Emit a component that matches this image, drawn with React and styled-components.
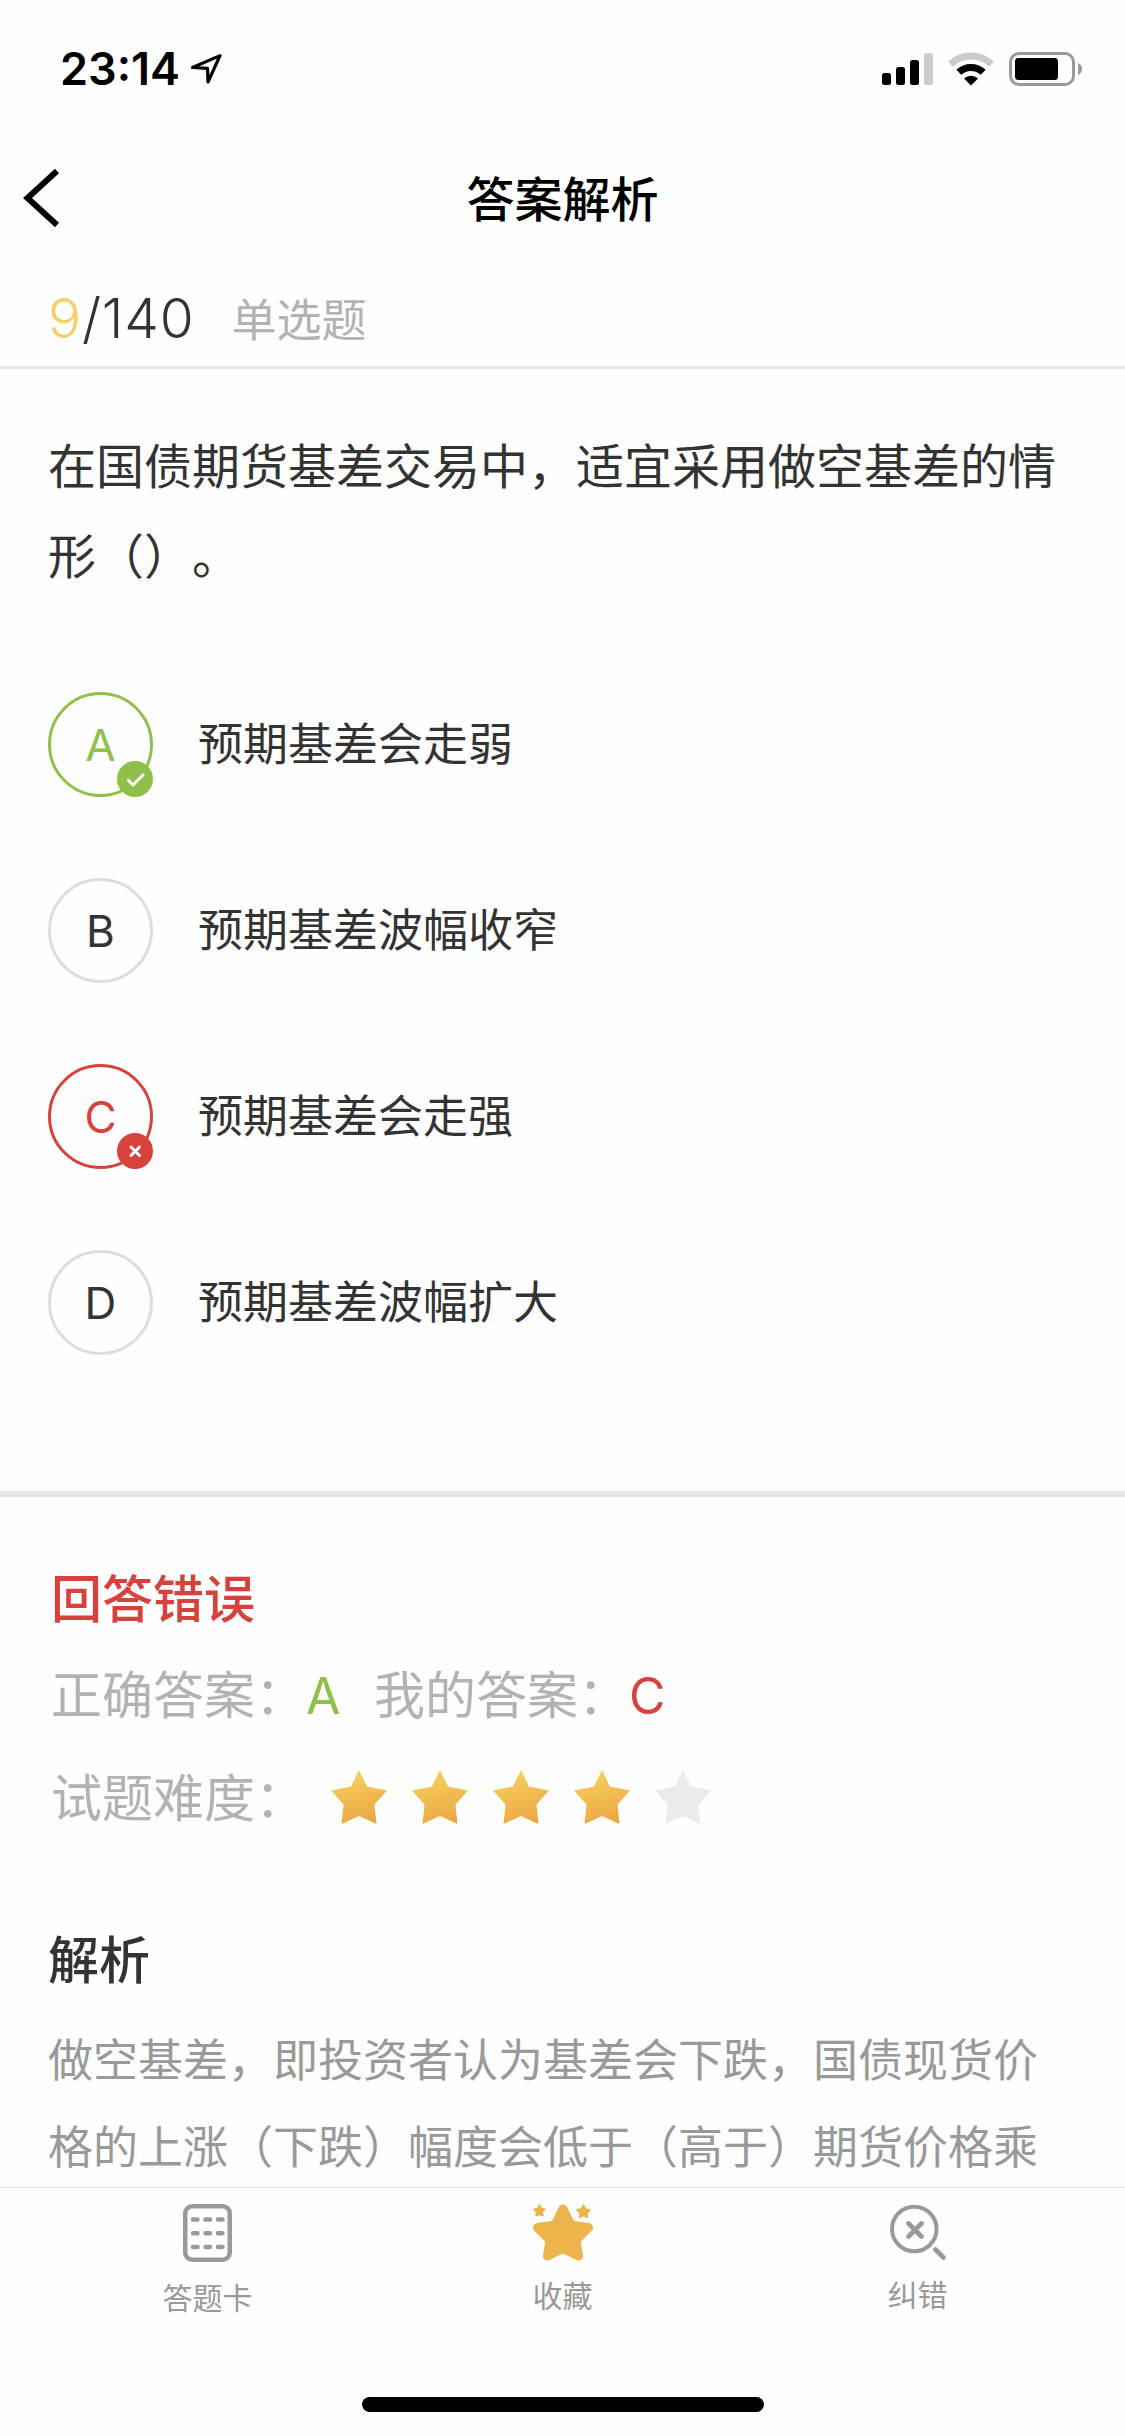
import React from 'react'
import styled, { createGlobalStyle } from 'styled-components'

const GlobalStyle = createGlobalStyle`
  * {
    box-sizing: border-box;
  }
  body {
    margin: 0;
    background: #fefefe;
    color: #333;
    font-family: Inter, 'Noto Sans CJK SC', sans-serif;
    text-spacing-trim: space-all;
  }
`

const Screen = styled.div`
  width: 1125px;
  height: 2436px;
  display: flex;
  flex-direction: column;
  overflow: hidden;
`

const StatusBar = styled.div`
  height: 132px;
  flex: none;
  padding: 5px 43px 0 60px;
  display: flex;
  align-items: center;
  justify-content: space-between;
`

const Clock = styled.div`
  display: flex;
  align-items: center;
  gap: 11px;
  color: #000;
  font-size: 45px;
  font-weight: 600;
`

const StatusIcons = styled.div`
  display: flex;
  align-items: center;
  gap: 15px;

  svg {
    display: block;
  }
`

const NavBar = styled.div`
  height: 132px;
  flex: none;
  display: grid;
  grid-template-columns: 120px 1fr 120px;
  align-items: center;
`

const BackButton = styled.button`
  border: 0;
  padding: 0 0 0 22px;
  background: none;
  display: flex;
`

const Title = styled.h1`
  margin: 0;
  padding-top: 3px;
  color: #000;
  font-size: 48px;
  line-height: 72px;
  font-weight: 500;
  text-align: center;
`

const Progress = styled.div`
  height: 105px;
  flex: none;
  padding: 6px 48px 0;
  display: flex;
  align-items: center;
  border-bottom: 3px solid #e5e5e5;
`

const Counter = styled.span`
  font-size: 55px;
  font-weight: 300;
  letter-spacing: 0.8px;

  em {
    color: #f5cf67;
    font-style: normal;
  }
`

const Kind = styled.span`
  margin-left: 37px;
  margin-top: -2px;
  color: #b2b2b2;
  font-size: 45px;
`

const Content = styled.main`
  flex: 1;
  min-height: 0;
  overflow: hidden;
`

const Question = styled.p`
  margin: 0;
  padding: 53px 48px 0;
  font-size: 48px;
  line-height: 90px;
`

const Options = styled.ul`
  list-style: none;
  margin: 0;
  padding: 90px 48px 136px;
  display: flex;
  flex-direction: column;
  gap: 81px;
`

const Option = styled.li`
  display: flex;
  align-items: center;
  gap: 45px;
  font-size: 45px;
  line-height: 66px;
`

const Letter = styled.span`
  position: relative;
  width: 105px;
  height: 105px;
  padding-top: 1px;
  display: flex;
  align-items: center;
  justify-content: center;
  border: 3px solid ${({ tone }) => tone || '#ddd'};
  border-radius: 50%;
  color: ${({ tone }) => tone || '#333'};
  font-size: 44px;

  svg {
    position: absolute;
    right: -3px;
    bottom: -3px;
  }
`

const Result = styled.section`
  padding: 67px 51px 0;
  border-top: 6px solid #e6e6e6;
  font-size: 51px;
`

const Verdict = styled.h2`
  margin: 0;
  color: #d8423d;
  font-size: 51px;
  line-height: 72px;
  font-weight: 500;
`

const Row = styled.div`
  display: flex;
  align-items: center;
  margin-top: ${({ top }) => top}px;
  height: 72px;
  line-height: 72px;
  color: #b2b2b2;
`

const Answer = styled.span`
  width: 35px;
  color: ${({ tone }) => tone};
  margin-right: 33px;
  font-size: 50px;
`

const Stars = styled.div`
  display: flex;
  gap: 25px;
  margin: -4px 0 0 25px;
`

const Analysis = styled.section`
  padding: 90px 48px 0;
`

const Heading = styled.h2`
  margin: 0;
  font-size: 51px;
  line-height: 72px;
  font-weight: 500;
`

const Paragraph = styled.p`
  margin: 20px 0 0;
  color: #999;
  font-size: 45px;
  line-height: 87px;
`

const TabBar = styled.nav`
  height: 249px;
  flex: none;
  border-top: 1px solid #ddd;
  display: flex;
  flex-direction: column;
  justify-content: space-between;
  align-items: center;
`

const Tabs = styled.div`
  width: 1065px;
  display: flex;
`

const Tab = styled.a`
  flex: 1;
  padding-top: 16px;
  display: flex;
  flex-direction: column;
  align-items: center;
  gap: ${({ gap }) => gap}px;
  color: #999;
  font-size: 30px;
  line-height: 44px;

  svg {
    display: block;
  }
`

const HomeIndicator = styled.div`
  width: 402px;
  height: 15px;
  margin-bottom: 24px;
  border-radius: 8px;
  background: #000;
`

const GREEN = '#91c04a'
const RED = '#d8423d'

const options = [
  { key: 'A', text: '预期基差会走弱', tone: GREEN, mark: 'M11.5 19.5l4.5 4.5L26 14' },
  { key: 'B', text: '预期基差波幅收窄' },
  { key: 'C', text: '预期基差会走强', tone: RED, mark: 'M14 14l8.5 8.5M22.5 14L14 22.5' },
  { key: 'D', text: '预期基差波幅扩大' },
]

const Star = ({ on }) => (
  <svg width="56" height="54" viewBox="0 0 56 54">
    <defs>
      <linearGradient id="gold" x1="0.35" y1="0" x2="0.65" y2="1">
        <stop offset="0" stopColor="#f6d25c" />
        <stop offset="1" stopColor="#eba545" />
      </linearGradient>
    </defs>
    <path
      d="M28 0l8 16.5 20 4L43.5 34.5 45.5 54 28 46 10.5 54l2-19.5L0 20.5l20-4z"
      fill={on ? 'url(#gold)' : '#ebebeb'}
    />
  </svg>
)

const CardIcon = () => (
  <svg width="49" height="58" viewBox="0 0 49 58" fill="none" stroke="#999">
    <rect x="2.25" y="2.25" width="44.5" height="53.5" rx="7" strokeWidth="4.5" />
    <path
      d="M10 15.5h4.5m8 0H27m8 0h4.5M10 29.25h4.5m8 0H27m8 0h4.5M10 43h4.5m8 0H27m8 0h4.5"
      strokeWidth="4.5"
      strokeLinecap="round"
    />
  </svg>
)

const FavoriteIcon = () => (
  <svg width="60" height="57" viewBox="0 0 60 57" fill="#ecb44b" stroke="#ecb44b" strokeLinejoin="round">
    <path d="M30 5l8 16 17.5 2.5L43 36l2.5 16L30 44.5 14.5 52 17 36 4.5 23.5 22 21z" strokeWidth="9" />
    <path d="M6.5 1l1.8 3.4 3.7.8-2.6 2.8.5 3.8-3.4-1.6-3.4 1.6.5-3.8L1 5.2l3.7-.8z" strokeWidth="1.5" />
    <path d="M50.5 1l2.2 3.9 4.4.9-3.1 3.2.5 4.5-4-2-4 2 .5-4.5-3.1-3.2 4.4-.9z" strokeWidth="1.5" />
  </svg>
)

const CorrectIcon = () => (
  <svg width="56" height="56" viewBox="0 0 56 56" fill="none" stroke="#999" strokeLinecap="round">
    <circle cx="24.3" cy="25" r="22.3" strokeWidth="4" />
    <path d="M18.5 19.5l13 13M31.5 19.5l-13 13M45.5 45.5l8 8" strokeWidth="4.6" />
  </svg>
)

export default function App() {
  return (
    <Screen>
      <GlobalStyle />
      <StatusBar>
        <Clock>
          23:14
          <svg width="31" height="30" viewBox="0 0 31 30" fill="none" stroke="#000" strokeWidth="3.2" strokeLinejoin="round">
            <path d="M29 1.6L1.6 13.5l14.9.8L17 28z" />
          </svg>
        </Clock>
        <StatusIcons>
          <svg width="51" height="33" viewBox="0 0 51 33">
            <rect y="21" width="9" height="12" rx="2.5" />
            <rect x="14" y="15" width="9" height="18" rx="2.5" />
            <rect x="28" y="8" width="9" height="25" rx="2.5" />
            <rect x="42" y="1" width="9" height="32" rx="2.5" fill="#ccc" />
          </svg>
          <svg width="46" height="34" viewBox="0 0 46 34" fill="none">
            <path d="M2.5 12.2a29.5 29.5 0 0 1 41 0" stroke="#ccc" strokeWidth="7" />
            <path d="M10.8 20.3a17.7 17.7 0 0 1 24.4 0" stroke="#000" strokeWidth="7" />
            <path d="M16 26.5a10 10 0 0 1 14 0l-7 7z" fill="#000" />
          </svg>
          <svg width="73" height="34" viewBox="0 0 73 34">
            <rect x="1.5" y="1.5" width="63" height="31" rx="8.5" fill="none" stroke="#999" strokeWidth="3" />
            <rect x="6" y="6" width="43" height="22" rx="3.5" />
            <path d="M69 11q4 2 4 6t-4 6z" fill="#999" />
          </svg>
        </StatusIcons>
      </StatusBar>

      <NavBar>
        <BackButton>
          <svg width="40" height="58" viewBox="0 0 40 58" fill="none" stroke="#000" strokeWidth="6">
            <path d="M35 2L5.5 29 35 56" />
          </svg>
        </BackButton>
        <Title>答案解析</Title>
      </NavBar>

      <Progress>
        <Counter>
          <em>9</em>/140
        </Counter>
        <Kind>单选题</Kind>
      </Progress>

      <Content>
        <Question>在国债期货基差交易中，适宜采用做空基差的情形（）。</Question>

        <Options>
          {options.map(({ key, text, tone, mark }) => (
            <Option key={key}>
              <Letter tone={tone}>
                {key}
                {mark && (
                  <svg width="36" height="36" viewBox="0 0 36 36" fill="none">
                    <circle cx="18" cy="18" r="18" fill={tone} />
                    <path d={mark} stroke="#fff" strokeWidth="3" strokeLinecap="round" />
                  </svg>
                )}
              </Letter>
              {text}
            </Option>
          ))}
        </Options>

        <Result>
          <Verdict>回答错误</Verdict>
          <Row top={24}>
            正确答案：<Answer tone={GREEN}>A</Answer>
            我的答案：<Answer tone={RED}>C</Answer>
          </Row>
          <Row top={31}>
            试题难度：
            <Stars>
              {[1, 2, 3, 4, 5].map(n => <Star key={n} on={n <= 4} />)}
            </Stars>
          </Row>
        </Result>

        <Analysis>
          <Heading>解析</Heading>
          <Paragraph>
            做空基差，即投资者认为基差会下跌，国债现货价格的上涨（下跌）幅度会低于（高于）期货价格乘
          </Paragraph>
        </Analysis>
      </Content>

      <TabBar>
        <Tabs>
          <Tab gap={14}>
            <CardIcon />
            答题卡
          </Tab>
          <Tab gap={13}>
            <FavoriteIcon />
            收藏
          </Tab>
          <Tab gap={13}>
            <CorrectIcon />
            纠错
          </Tab>
        </Tabs>
        <HomeIndicator />
      </TabBar>
    </Screen>
  )
}
